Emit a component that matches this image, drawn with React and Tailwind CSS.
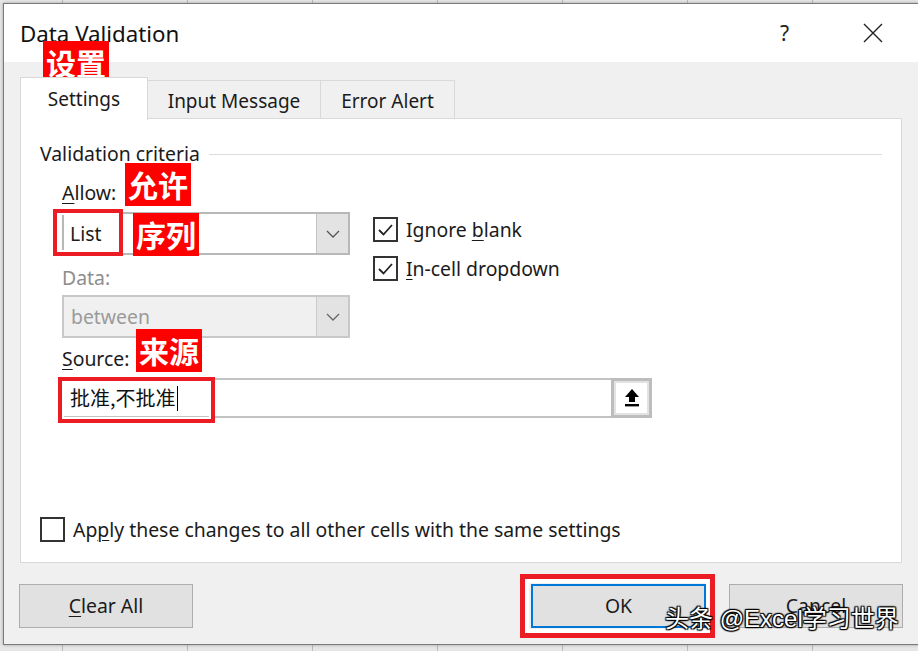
const Check = () => (
  <div className="w-[25px] h-[25px] border-2 border-[#333333] bg-white flex items-center justify-center">
    <svg width="19" height="19" viewBox="0 0 19 19" fill="none">
      <path d="M3 10 L7.5 14.5 L16 5" stroke="#222" strokeWidth="1.8" />
    </svg>
  </div>
);

const Chevron = ({ color = "#555" }) => (
  <svg width="14" height="8" viewBox="0 0 14 8" fill="none">
    <path d="M1 1 L7 7 L13 1" stroke={color} strokeWidth="1.3" />
  </svg>
);

const RedTag = ({ children, className }) => (
  <div
    className={
      "absolute bg-[#ff0000] text-white font-bold text-[30px] leading-[43px] h-[43px] px-[3px] font-['Noto_Sans_CJK_SC',sans-serif] " +
      className
    }
  >
    {children}
  </div>
);

export default function App() {
  return (
    <div className="relative w-[918px] h-[651px] overflow-hidden bg-[#e6e6e6] font-['Noto_Sans','Noto_Sans_CJK_SC',sans-serif] text-[#1b1b1b]">
      <div className="absolute inset-0 bg-[repeating-linear-gradient(90deg,transparent_0px,transparent_62px,#bcbcbc_62px,#bcbcbc_63px,transparent_63px,transparent_125px)]" />
      <div className="relative ml-[3px] mt-[3px] w-[916px] h-[642px] border border-[#7a7a7a] bg-[#f0f0f0] flex flex-col shadow-[0_0_3px_rgba(0,0,0,0.3)]">
        {/* title bar */}
        <div className="h-[58px] bg-white flex items-center pl-[16px] pr-[35px]">
          <span className="text-[22.3px] leading-none text-[#111] pt-[2px]">Data Validation</span>
          <span className="ml-auto text-[21px] leading-none text-[#222]">?</span>
          <svg className="ml-[74px]" width="20" height="20" viewBox="0 0 20 20" fill="none">
            <path d="M1 1 L19 19 M19 1 L1 19" stroke="#222" strokeWidth="1.4" />
          </svg>
        </div>

        {/* body */}
        <div className="flex-1 px-[16px] flex flex-col">
          {/* tabs */}
          <div className="mt-[15px] h-[41px] flex items-end text-[19px]">
            <div className="relative z-10 -mb-[2px] w-[128px] h-[43px] bg-white border border-b-0 border-[#d9d9d9] flex items-center justify-center">
              Settings
            </div>
            <div className="w-[173px] h-[38px] bg-[#f0f0f0] border border-l-0 border-b-0 border-[#d9d9d9] flex items-center justify-center pt-[3px]">
              Input Message
            </div>
            <div className="w-[134px] h-[38px] bg-[#f0f0f0] border border-l-0 border-b-0 border-[#d9d9d9] flex items-center justify-center pt-[3px]">
              Error Alert
            </div>
          </div>

          {/* panel */}
          <div className="w-[882px] h-[445px] bg-white border border-[#d9d9d9] flex flex-col text-[19.4px]">
            <div className="mt-[21px] h-[28px] flex items-center pl-[19px] pr-[19px]">
              <span>Validation criteria</span>
              <div className="flex-1 h-px bg-[#dcdcdc] ml-[9px]" />
            </div>

            <div className="pl-[41px] flex flex-col">
              <div className="mt-[11px] h-[28px] flex items-center">
                <span>
                  <span className="underline underline-offset-[3px] decoration-1">A</span>llow:
                </span>
              </div>

              <div className="mt-[5px] flex items-start">
                <div className="w-[288px] flex flex-col">
                  <div className="h-[43px] border-2 border-[#b8b8b8] bg-white flex">
                    <div className="flex-1 flex items-center pl-[6px]">List</div>
                    <div className="w-[32px] bg-[#e3e3e3] border-l border-[#c4c4c4] flex items-center justify-center">
                      <Chevron />
                    </div>
                  </div>
                  <div className="mt-[9px] h-[28px] flex items-center text-[#8d8d8d]">Data:</div>
                  <div className="mt-[3px] h-[43px] border-2 border-[#c8c8c8] bg-[#f0f0f0] flex">
                    <div className="flex-1 flex items-center pl-[7px] text-[#9a9a9a]">between</div>
                    <div className="w-[32px] bg-[#e3e3e3] border-l border-[#cccccc] flex items-center justify-center">
                      <Chevron color="#666" />
                    </div>
                  </div>
                </div>

                <div className="ml-[23px] mt-[5px] flex flex-col gap-[14px]">
                  <div className="flex items-center h-[25px]">
                    <Check />
                    <span className="ml-[8px]">
                      Ignore <span className="underline underline-offset-[3px] decoration-1">b</span>lank
                    </span>
                  </div>
                  <div className="flex items-center h-[25px]">
                    <Check />
                    <span className="ml-[8px]">
                      <span className="underline underline-offset-[3px] decoration-1">I</span>n-cell dropdown
                    </span>
                  </div>
                </div>
              </div>

              <div className="mt-[7px] h-[28px] flex items-center">
                <span>
                  <span className="underline underline-offset-[3px] decoration-1">S</span>ource:
                </span>
              </div>

              <div className="mt-[5px] w-[590px] h-[40px] border-2 border-[#c3c3c3] border-r-0 bg-white flex">
                <div className="flex-1 flex items-center pl-[6px] font-['Noto_Sans_CJK_SC',sans-serif] text-[20px] text-[#111]">
                  <span>批准,不批准</span>
                  <span className="ml-[1px] w-px h-[25px] bg-black" />
                </div>
                <div className="w-[41px] -my-[2px] border-[3px] border-[#bdbdbd] bg-[#e3e3e3] p-[2px]">
                  <div className="w-full h-full bg-white flex items-center justify-center">
                    <svg width="16" height="20" viewBox="0 0 16 20">
                      <path d="M8 1 L15 9 L11 9 L11 14 L5 14 L5 9 L1 9 Z" fill="#000" />
                      <rect x="1" y="16" width="14" height="2.4" fill="#000" />
                    </svg>
                  </div>
                </div>
              </div>
            </div>

            <div className="mt-auto mb-[20px] pl-[19px] flex items-center h-[26px]">
              <div className="w-[25px] h-[25px] border-2 border-[#333333] bg-white" />
              <span className="ml-[8px] pt-[2px]">
                Ap<span className="underline underline-offset-[3px] decoration-1">p</span>ly these changes to all other cells with the same settings
              </span>
            </div>
          </div>

          {/* buttons */}
          <div className="mt-[21px] h-[44px] flex text-[19.4px]">
            <div className="-ml-px w-[174px] h-[44px] bg-[#e1e1e1] border border-[#adadad] flex items-center justify-center">
              <span>
                <span className="underline underline-offset-[3px] decoration-1">C</span>lear All
              </span>
            </div>
            <div className="ml-auto w-[175px] h-[44px] bg-[#e1e1e1] border-2 border-[#0078d7] flex items-center justify-center">
              OK
            </div>
            <div className="ml-[23px] -mr-px w-[174px] h-[44px] bg-[#e1e1e1] border border-[#adadad] flex items-center justify-center">
              Cancel
            </div>
          </div>
        </div>
      </div>

      {/* annotations */}
      <RedTag className="left-[43px] top-[41px]">设置</RedTag>
      <RedTag className="left-[125px] top-[163px]">允许</RedTag>
      <RedTag className="left-[133px] top-[213px]">序列</RedTag>
      <RedTag className="left-[136px] top-[329px]">来源</RedTag>

      <div className="absolute left-[53px] top-[209px] w-[70px] h-[47px] border-[4px] border-[#ec1c24] shadow-[inset_0_0_0_2px_#ffffff]" />
      <div className="absolute left-[58px] top-[377px] w-[157px] h-[46px] border-[4px] border-[#ec1c24] shadow-[inset_0_0_0_2px_#ffffff]" />
      <div className="absolute left-[520px] top-[574px] w-[195px] h-[64px] border-[5px] border-[#ec1c24] shadow-[inset_0_0_0_4px_#ffffff]" />

      <div className="absolute left-[665px] top-[603px] text-[24px] leading-[32px] text-white font-['Liberation_Sans','Noto_Sans_CJK_SC',sans-serif] [text-shadow:0_0_2px_#000,1px_1px_1px_#000,-1px_-1px_1px_#000,1px_-1px_1px_#000,-1px_1px_1px_#000]">
        头条 @Excel学习世界
      </div>
    </div>
  );
}
